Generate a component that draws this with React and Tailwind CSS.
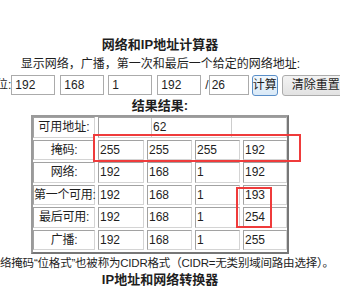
import React from "react";

const cellCls =
  "h-[20.5px] border border-t-[#a2a2a2] border-l-[#a2a2a2] border-r-[#d4d4d4] border-b-[#d4d4d4] bg-white";

const rows = [
  ["掩码:", ["255", "255", "255", "192"]],
  ["网络:", ["192", "168", "1", "192"]],
  ["第一个可用:", ["192", "168", "1", "193"]],
  ["最后可用:", ["192", "168", "1", "254"]],
  ["广播:", ["192", "168", "1", "255"]],
];

export default function App() {
  return (
    <div
      className="relative w-[340px] h-[286px] overflow-hidden bg-white text-[#1e1e1e]"
      style={{ fontFamily: '"Liberation Sans", "Noto Sans CJK SC", sans-serif' }}
    >
      <div className="pt-[37px]">
        <div className="w-[320px] text-center font-bold text-[13px] leading-[16px]">
          网络和IP地址计算器
        </div>
        <div className="w-[321px] mt-[3px] text-center text-[12px] leading-[16px] whitespace-nowrap">
          显示网络，广播，第一次和最后一个给定的网络地址:
        </div>
        <div className="mt-[3px] flex items-start h-[21px] text-[12px] whitespace-nowrap">
          <span className="ml-[-4px] w-[16px] leading-[20px]">位:</span>
          <input
            readOnly
            value="192"
            className="w-[44px] h-[20px] border border-[#ababab] px-[3px] text-[12px] outline-none"
          />
          <input
            readOnly
            value="168"
            className="ml-[5px] w-[44px] h-[20px] border border-[#ababab] px-[3px] text-[12px] outline-none"
          />
          <input
            readOnly
            value="1"
            className="ml-[4px] w-[44px] h-[20px] border border-[#ababab] px-[3px] text-[12px] outline-none"
          />
          <input
            readOnly
            value="192"
            className="ml-[5px] w-[44px] h-[20px] border border-[#ababab] px-[3px] text-[12px] outline-none"
          />
          <span className="ml-[4px] w-[4px] leading-[20px]">/</span>
          <input
            readOnly
            value="26"
            className="w-[40px] h-[20px] border border-[#ababab] px-[2px] text-[12px] outline-none"
          />
          <button className="ml-[3px] w-[37px] h-[21px] rounded-[3px] border border-[#5b8fc8] bg-gradient-to-b from-[#f2f8fd] to-[#d9e9f7] text-[12px] leading-[19px] text-center">
            计算
          </button>
          <button className="ml-[4px] w-[70px] h-[21px] shrink-0 rounded-[3px] border border-[#acacac] bg-gradient-to-b from-[#f3f3f3] to-[#e2e2e2] text-[12px] leading-[19px] text-left pl-[9px]">
            清除重置
          </button>
        </div>
        <div className="mt-[2px] w-[320px] text-center font-bold text-[13px] leading-[16px]">
          结果结果:
        </div>
        <div className="mt-[1px] ml-[31px] w-[258px] border-2 border-t-[#9a9a9a] border-l-[#9a9a9a] border-r-[#777] border-b-[#777] pb-[2px]">
          <div className="grid grid-cols-[62px_46px_45px_45px_44px] gap-x-[3px] gap-y-[2px] text-[12px] leading-[18.5px]">
            <div className={`${cellCls} text-center`}>可用地址:</div>
            <div className={`${cellCls} col-span-4 flex justify-center`}>
              <div className="w-[81px] h-full border-l border-r border-[#cdcdcd] pl-[1px] ml-[-2px]">
                62
              </div>
            </div>
            {rows.map(([label, vals]) => (
              <React.Fragment key={label}>
                <div className={`${cellCls} text-center whitespace-nowrap tracking-[-0.3px]`}>
                  {label}
                </div>
                {vals.map((v, i) => (
                  <div key={i} className={`${cellCls} pl-[1px]`}>
                    {v}
                  </div>
                ))}
              </React.Fragment>
            ))}
          </div>
        </div>
        <div className="mt-[1px] text-[11.5px] leading-[16px] whitespace-nowrap tracking-[-0.2px]">
          络掩码“位格式”也被称为CIDR格式（CIDR=无类别域间路由选择）。
        </div>
        <div className="mt-[1px] w-[320px] text-center font-bold text-[13px] leading-[16px]">
          IP地址和网络转换器
        </div>
      </div>

      <div className="absolute left-[93px] top-[134px] w-[208px] h-[28px] border-2 border-[#ef3b3b]" />
      <div className="absolute left-[236px] top-[187px] w-[36px] h-[41px] border-2 border-[#ef3b3b]" />
    </div>
  );
}
